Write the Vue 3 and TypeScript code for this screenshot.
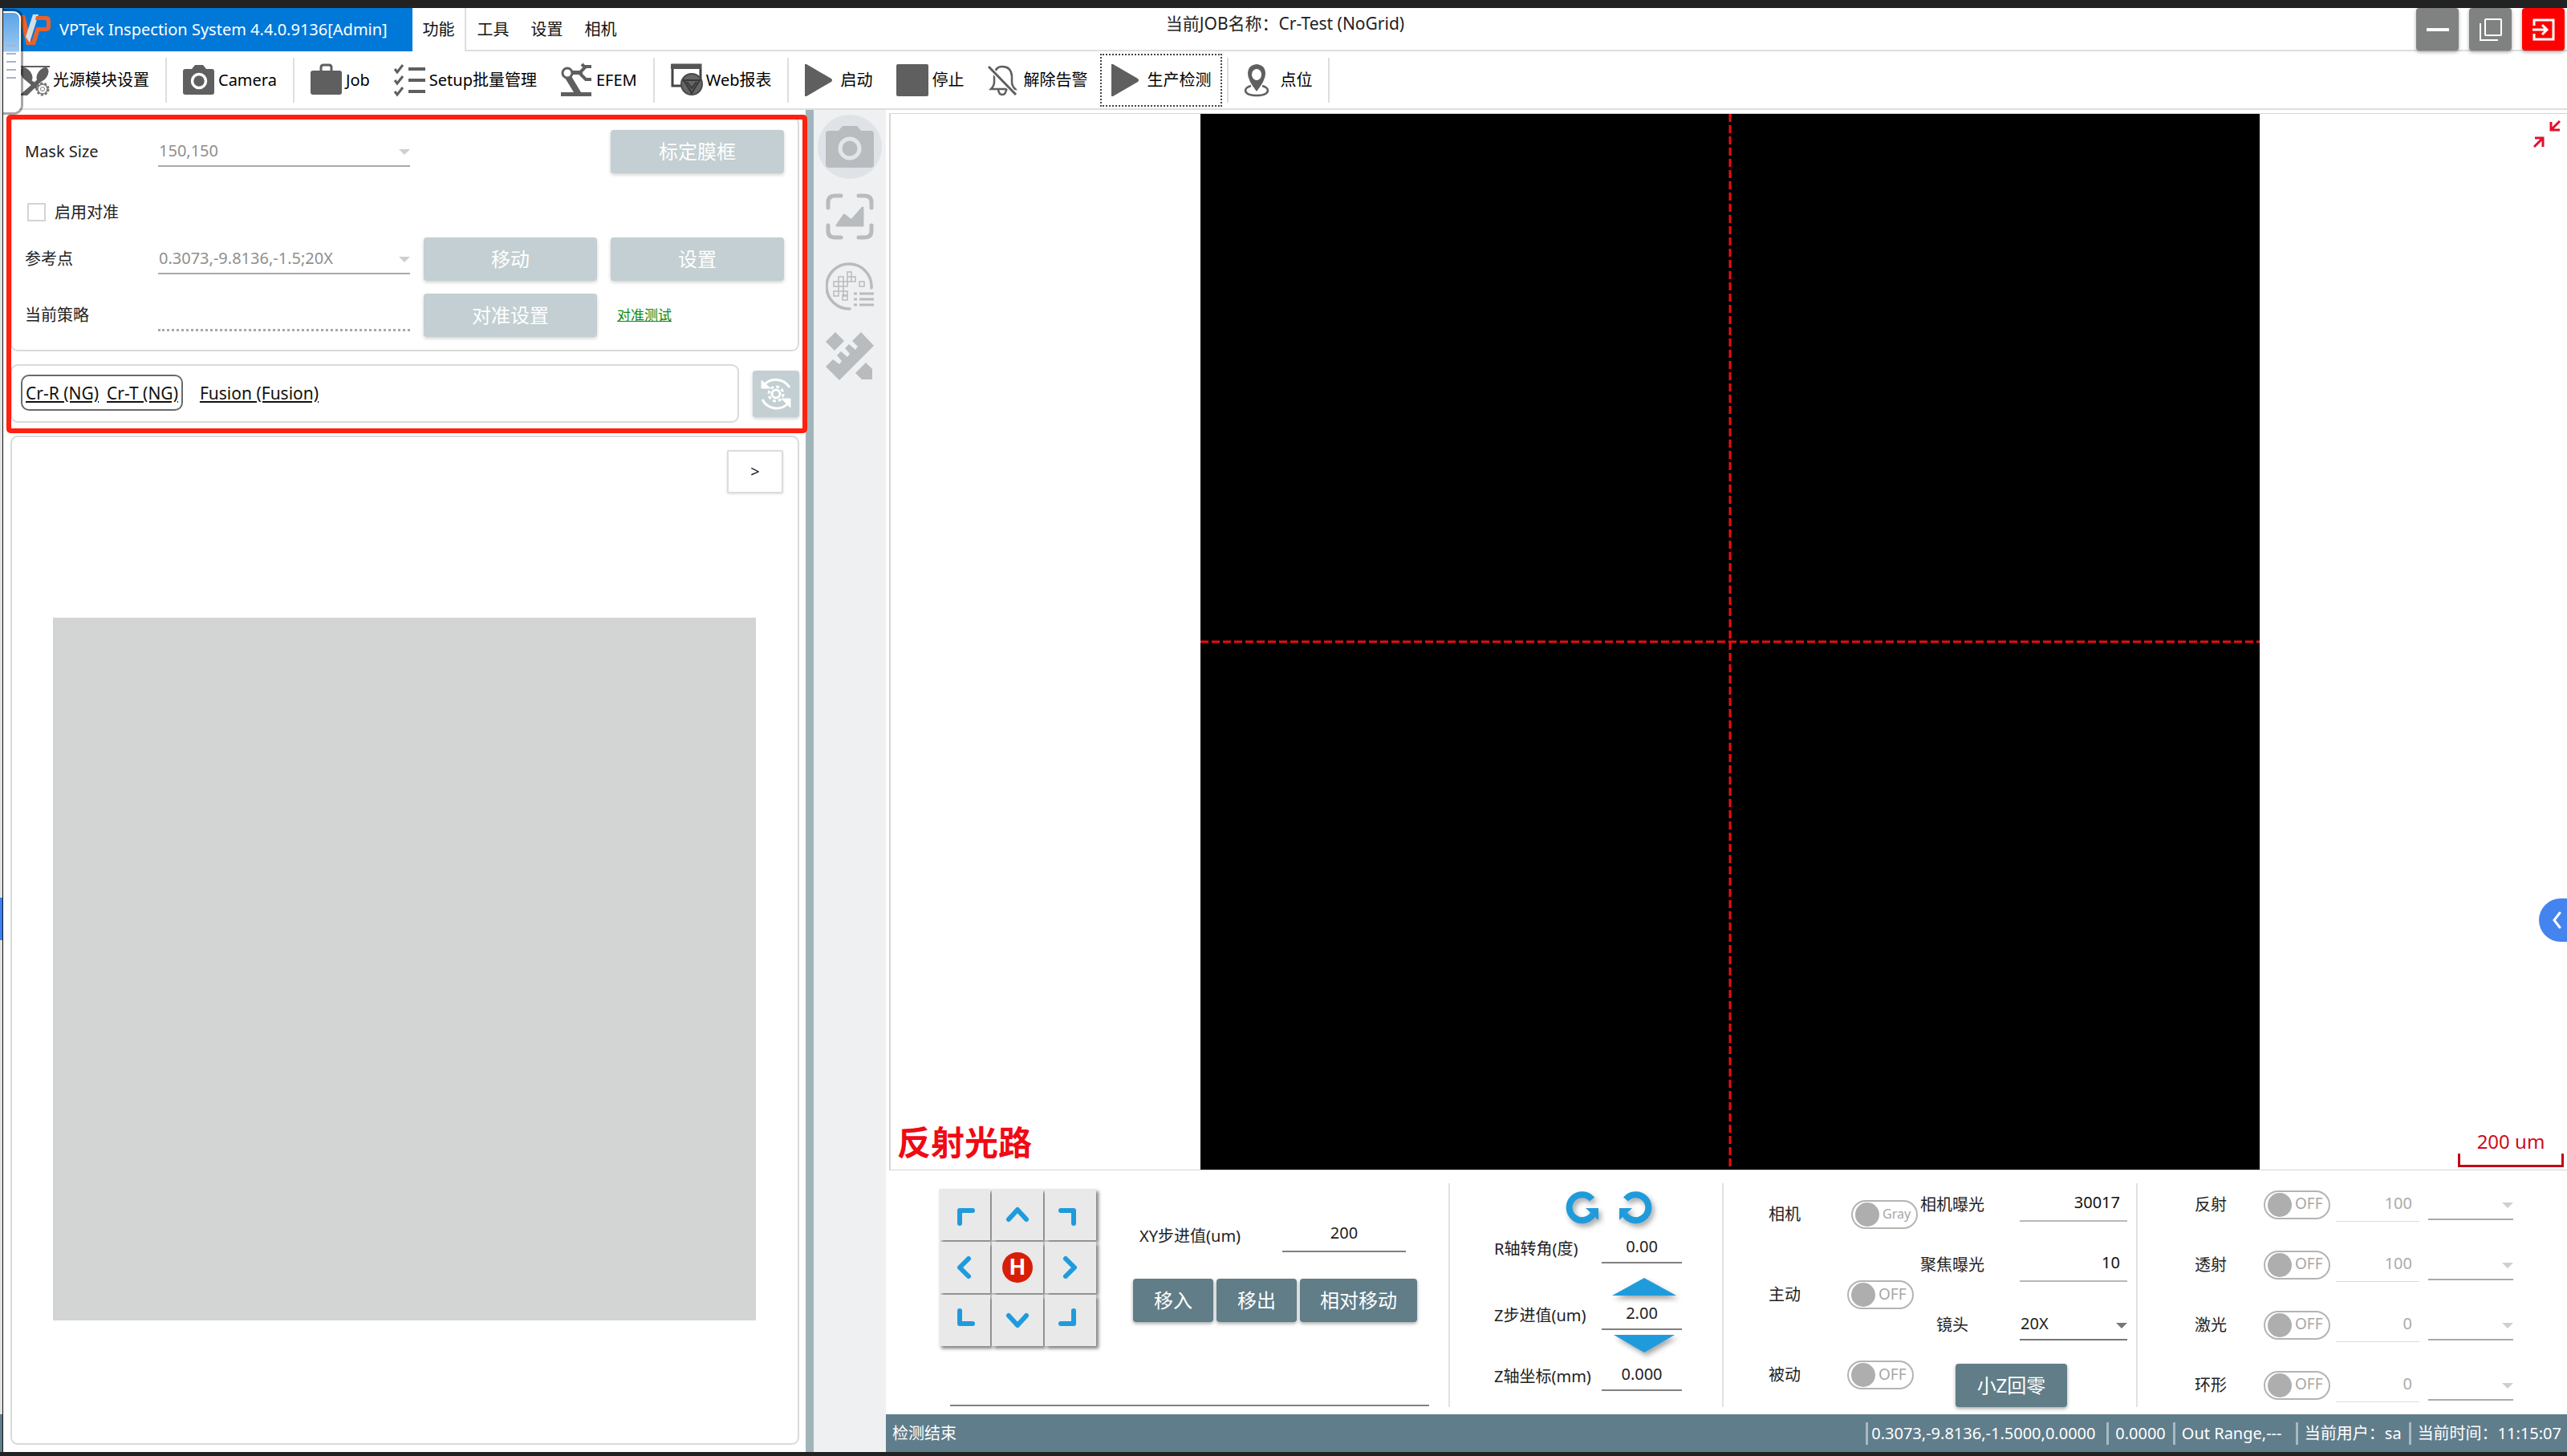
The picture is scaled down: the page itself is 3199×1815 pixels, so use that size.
<script setup lang="ts">
import { ref } from 'vue'

interface Tool {
  icon: string
  label: string
  active?: boolean
}

const menus = ['功能', '工具', '设置', '相机']

const toolGroups: Tool[][] = [
  [{ icon: 'lamp', label: '光源模块设置' }],
  [{ icon: 'camera', label: 'Camera' }],
  [
    { icon: 'case', label: 'Job' },
    { icon: 'list', label: 'Setup批量管理' },
    { icon: 'robot', label: 'EFEM' },
  ],
  [{ icon: 'web', label: 'Web报表' }],
  [
    { icon: 'play', label: '启动' },
    { icon: 'stop', label: '停止' },
    { icon: 'bell', label: '解除告警' },
    { icon: 'play', label: '生产检测', active: true },
  ],
  [{ icon: 'pin', label: '点位' }],
]

const icons: Record<string, string> = {
  lamp: '<path d="M0 3h40" stroke="#5f5f5f" stroke-width="2"/><path d="M5 4l6 6M36 4l-6 6" stroke="#5f5f5f" stroke-width="2"/><ellipse cx="11" cy="13" rx="6" ry="10" transform="rotate(-35 11 13)"/><ellipse cx="31" cy="13" rx="6" ry="10" transform="rotate(35 31 13)"/><path d="M27 17l3 4-18 18H2z"/><path d="M13 17l-2 4 16 14 3-6z"/><circle cx="31" cy="31" r="7" fill="#fff" stroke="#777" stroke-width="3" stroke-dasharray="3 2"/><circle cx="31" cy="31" r="6" fill="#fff" stroke="#777" stroke-width="1.500"/><circle cx="31" cy="31" r="2.500" fill="none" stroke="#777"/>',
  camera: '<path d="M3 6h8l4-5h10l4 5h7q3 0 3 3v26q0 3-3 3H3q-3 0-3-3V9q0-3 3-3z"/><circle cx="20" cy="21" r="8.500" fill="none" stroke="#fff" stroke-width="3.500"/>',
  case: '<rect x="0" y="8" width="39" height="30" rx="3"/><path d="M13 9V4q0-3 3-3h7q3 0 3 3v5" fill="none" stroke="#5f5f5f" stroke-width="3"/>',
  list: '<path d="M1 6l3 4 7-9M1 20l3 4 7-9M1 34l3 4 7-9" fill="none" stroke="#5f5f5f" stroke-width="3"/><path d="M18 6h21M18 20h21M18 34h21" stroke="#5f5f5f" stroke-width="4"/>',
  robot: '<path d="M0 35h38v5H0z"/><circle cx="8" cy="11" r="6" fill="none" stroke="#5f5f5f" stroke-width="3"/><path d="M5 17l11 18h9L13 15z"/><path d="M13 8h10v5H13z"/><path d="M38 3h-7l-6 6v4l6 6h7M29 3l-3-3" fill="none" stroke="#5f5f5f" stroke-width="4"/>',
  web: '<path d="M2 1h35v26H2z" fill="#fff" stroke="#444" stroke-width="3"/><path d="M0 0h38v6H0z" fill="#555"/><circle cx="26" cy="25" r="13" fill="#666" stroke="#4a4a4a" stroke-width="2"/><path d="M16 20h20L26 36zM20 22l6 8 6-8" fill="none" stroke="#383838" stroke-width="2"/>',
  play: '<path d="M0 0h2l31 18q2 2 0 4L2 40H0z"/>',
  stop: '<rect width="40" height="40" rx="2"/>',
  bell: '<path d="M4 31h30q-4-4-4-9v-7Q29 3 18 3 9 3 8 14v8q0 5-4 9zM13 32q1 6 5 6t5-6" fill="none" stroke="#5f5f5f" stroke-width="2.500"/><path d="M1 3l34 35" stroke="#fff" stroke-width="6"/><path d="M1 3l34 35" stroke="#5f5f5f" stroke-width="3"/>',
  pin: '<path d="M8 27q-7 2-7 6 1 6 14 6t14-6q0-4-7-6" fill="none" stroke="#5f5f5f" stroke-width="2.500"/><path fill-rule="evenodd" d="M15 0q11 1 11 12 0 8-11 22Q4 20 4 12 4 1 15 0zm0 6a6 7 0 1 0 .1 0z"/>',
}

const pad: { name: string; d: string }[] = [
  { name: '左上', d: 'M26 43V27h16' },
  { name: '上', d: 'M21 38l11-12 11 12' },
  { name: '右上', d: 'M20 27h16v16' },
  { name: '左', d: 'M37 21L26 32l11 11' },
  { name: '原点', d: '' },
  { name: '右', d: 'M26 21l11 11-11 11' },
  { name: '左下', d: 'M26 20v16h16' },
  { name: '下', d: 'M21 26l11 12 11-12' },
  { name: '右下', d: 'M20 36h16V20' },
]

const lights = [
  { name: '反射', value: '100' },
  { name: '透射', value: '100' },
  { name: '激光', value: '0' },
  { name: '环形', value: '0' },
]

const triggers = [
  { name: '相机', state: 'Gray' },
  { name: '主动', state: 'OFF' },
  { name: '被动', state: 'OFF' },
]

const status = ['0.3073,-9.8136,-1.5000,0.0000', '0.0000', 'Out Range,---', '当前用户：sa', '当前时间：11:15:07']

const xyStep = ref('200')
const rAngle = ref('0.00')
const zStep = ref('2.00')
const zPos = ref('0.000')
const cameraExposure = ref('30017')
const focusExposure = ref('10')
</script>

<template>
  <div class="screen">
    <div class="edge">
      <i class="edge-space-a"></i><i class="edge-tab"></i><i class="edge-space-b"></i><i class="edge-status"></i>
    </div>
    <div class="app">
      <header class="titlebar">
        <div class="brand">
          <svg class="logo" width="40" height="42" viewBox="0 0 40 42">
            <path d="M0 3h7l6 25 3 12h-7z" fill="#e8622a" />
            <path d="M17 2h7L13 37l-5-7z" fill="#d5dde6" />
            <path d="M21 4h13q5 0 5 6v7q0 6-6 6h-8l-5 17h-6l7-22h11q2 0 2-3v-3q0-3-2-3H20z" fill="#e8622a" />
          </svg>
          <span>VPTek Inspection System 4.4.0.9136[Admin]</span>
        </div>
        <nav class="menus">
          <button v-for="(m, i) in menus" :key="m" class="menu" :class="{ current: i === 0 }">{{ m }}</button>
        </nav>
        <div class="job">当前JOB名称：Cr-Test (NoGrid)</div>
        <div class="window-buttons">
          <button class="win" aria-label="最小化">
            <svg width="28" height="28" viewBox="0 0 28 28"><path d="M0 14h28" stroke="#fff" stroke-width="4" /></svg>
          </button>
          <button class="win" aria-label="还原">
            <svg width="28" height="28" viewBox="0 0 28 28" fill="none" stroke="#fff" stroke-width="2">
              <rect x="7" y="1" width="20" height="20" rx="1" /><path d="M1 6v21h22" />
            </svg>
          </button>
          <button class="win exit" aria-label="退出">
            <svg width="28" height="28" viewBox="0 0 28 28" fill="none" stroke="#fff" stroke-width="3">
              <path d="M2 9V2h24v24H2v-7M0 14h18M12 8l6 6-6 6" />
            </svg>
          </button>
        </div>
      </header>

      <div class="toolbar">
        <div v-for="(group, g) in toolGroups" :key="g" class="tool-group">
          <button v-for="t in group" :key="t.label" class="tool" :class="{ active: t.active }">
            <svg width="40" height="40" viewBox="0 0 40 40" fill="#5f5f5f" v-html="icons[t.icon]"></svg>
            <span>{{ t.label }}</span>
          </button>
        </div>
      </div>

      <div class="body">
        <aside class="sidebar">
          <div class="setup">
            <div class="highlight"></div>
            <section class="card form">
              <label for="mask">Mask Size</label>
              <span class="select dim"><select id="mask" disabled><option>150,150</option></select></span>
              <button class="btn pale last" disabled>标定膜框</button>

              <label class="check"><input type="checkbox" disabled /><span>启用对准</span></label>

              <label for="refpoint">参考点</label>
              <span class="select dim"><select id="refpoint" disabled><option>0.3073,-9.8136,-1.5;20X</option></select></span>
              <button class="btn pale" disabled>移动</button>
              <button class="btn pale" disabled>设置</button>

              <label for="strategy" class="spaced">当前策略</label>
              <input id="strategy" class="dotted spaced" disabled />
              <button class="btn pale spaced" disabled>对准设置</button>
              <a class="test spaced" href="#">对准测试</a>
            </section>

            <div class="recipes">
              <section class="card recipe-list">
                <div class="pair"><a href="#">Cr-R (NG)</a><a href="#">Cr-T (NG)</a></div>
                <a href="#">Fusion (Fusion)</a>
              </section>
              <button class="refresh" aria-label="刷新">
                <svg width="44" height="44" viewBox="0 0 44 44" fill="none" stroke="#fff" stroke-width="3">
                  <path d="M39 14A20 20 0 0 0 7 11M5 29a20 20 0 0 0 32 5" />
                  <path d="M4 5v10h11zM40 39V28H29z" fill="#fff" stroke-width="1" />
                  <circle cx="22" cy="22" r="5" />
                  <circle cx="22" cy="22" r="9" stroke-dasharray="4 3.070" />
                </svg>
              </button>
            </div>
          </div>

          <section class="card map">
            <button class="expand">&gt;</button>
            <div class="plate"></div>
          </section>
        </aside>

        <div class="splitter"></div>

        <nav class="rail">
          <button class="rail-button on" aria-label="拍照">
            <svg width="60" height="60" viewBox="0 0 60 60" fill="#b9bcbe">
              <path d="M4 10h12l5-6h18l5 6h12q4 0 4 4v38q0 4-4 4H4q-4 0-4-4V14q0-4 4-4z" />
              <circle cx="30" cy="32" r="12" fill="none" stroke="#e2e5e9" stroke-width="5" />
            </svg>
          </button>
          <button class="rail-button" aria-label="图像">
            <svg width="60" height="60" viewBox="0 0 60 60" fill="none" stroke="#b9bcbe" stroke-width="5" stroke-linecap="round">
              <path d="M19 4H12Q3 4 3 12v7M41 4h7q9 0 9 8v7M19 56H12q-9 0-9-8v-7M41 56h7q9 0 9-8v-7" />
              <path d="M14 41l9-13 9 7 14-16v22z" fill="#b9bcbe" stroke-width="3" stroke-linejoin="round" />
            </svg>
          </button>
          <button class="rail-button" aria-label="缺陷图">
            <svg width="60" height="60" viewBox="0 0 60 60" fill="none" stroke="#b9bcbe">
              <path d="M57 32A28 28 0 1 0 30 58" stroke-width="3.500" stroke-linecap="round" />
              <path d="M42 39h18M42 46h18M42 53h18M35 39h4M35 46h4M35 53h4" stroke-width="3" />
              <path d="M27 12h5v6h-5zM32 18h5v6h-5zM16 18h6v6h-6zM10 24h6v6h-6zM16 24h6v6h-6zM22 24h5v6h-5zM27 18h5v6h-5zM16 30h6v6h-6zM10 36h6v6h-6zM22 36h5v6h-5zM21 41h6v6h-6zM42 24h6v6h-6z" stroke-width="1.500" />
            </svg>
          </button>
          <button class="rail-button" aria-label="测量">
            <svg width="60" height="60" viewBox="0 0 60 60" fill="#b9bcbe">
              <path d="M12 0l11 11-12 12L0 12zM44 0l16 17-43 43L0 43l9-9 8 6 3-4-6-7 5-5 8 7 3-4-6-7 5-5 8 7 3-4-7-7zM50 38l8 8v13H45l-8-8z" />
            </svg>
          </button>
        </nav>

        <main class="main">
          <section class="viewer">
            <div class="frame">
              <svg class="cross" width="100%" height="100%" stroke="#f00a14" stroke-width="3" stroke-dasharray="10 4">
                <line x1="50%" y1="0" x2="50%" y2="100%" /><line x1="0" y1="50%" x2="100%" y2="50%" />
              </svg>
            </div>
            <svg class="collapse" width="34" height="34" viewBox="0 0 34 34" fill="none" stroke="#e0102c" stroke-width="3">
              <path d="M33 1L23 11M22 2v10h11M1 33l10-10M2 22h10v11" />
            </svg>
            <strong class="light-path">反射光路</strong>
            <div class="scale"><span>200 um</span><i></i></div>
          </section>

          <section class="controls">
            <div class="group motion">
              <div class="motion-top">
                <div class="pad">
                  <button v-for="p in pad" :key="p.name" :aria-label="p.name">
                    <svg v-if="p.d" width="64" height="64" viewBox="0 0 64 64" fill="none" stroke="#1f9bdc" stroke-width="6" stroke-linecap="round" stroke-linejoin="round"><path :d="p.d" /></svg>
                    <b v-else>H</b>
                  </button>
                </div>
                <div class="xy">
                  <div class="xy-row">
                    <label for="xy">XY步进值(um)</label><input id="xy" v-model="xyStep" class="field" />
                  </div>
                  <div class="xy-buttons">
                    <button class="btn short">移入</button><button class="btn short">移出</button><button class="btn wide">相对移动</button>
                  </div>
                </div>
              </div>
              <input class="field message" aria-label="消息" />
            </div>

            <div class="group axes">
              <div class="rotate">
                <button aria-label="逆时针">
                  <svg width="42" height="42" viewBox="0 0 42 42"><path d="M33 11A16 16 0 1 0 34 30" fill="none" stroke="#1f9bdc" stroke-width="8" /><path d="M25 22h16v15z" fill="#1f9bdc" /></svg>
                </button>
                <button aria-label="顺时针">
                  <svg width="42" height="42" viewBox="0 0 42 42"><path d="M9 11A16 16 0 1 1 8 30" fill="none" stroke="#1f9bdc" stroke-width="8" /><path d="M17 22H1v15z" fill="#1f9bdc" /></svg>
                </button>
              </div>
              <div class="axis"><label for="r">R轴转角(度)</label><input id="r" v-model="rAngle" class="field" /></div>
              <button class="arrow up" aria-label="上升">
                <svg width="80" height="22" viewBox="0 0 80 22"><path d="M40 0l40 22H0z" fill="#1f9bdc" /></svg>
              </button>
              <div class="axis"><label for="z">Z步进值(um)</label><input id="z" v-model="zStep" class="field" /></div>
              <button class="arrow down" aria-label="下降">
                <svg width="80" height="22" viewBox="0 0 80 22"><path d="M2 0h76L40 22z" fill="#1f9bdc" /></svg>
              </button>
              <div class="axis"><label for="zp">Z轴坐标(mm)</label><input id="zp" v-model="zPos" class="field" /></div>
            </div>

            <div class="group optics">
              <div class="triggers">
                <div v-for="t in triggers" :key="t.name" class="trigger">
                  <span class="name">{{ t.name }}</span>
                  <label class="toggle" :class="{ gray: t.state === 'Gray' }"><input type="checkbox" :aria-label="t.name" /><span>{{ t.state }}</span></label>
                </div>
              </div>
              <div class="exposure">
                <div class="line"><label for="ce">相机曝光</label><input id="ce" v-model="cameraExposure" class="number" /></div>
                <div class="line"><label for="fe">聚焦曝光</label><input id="fe" v-model="focusExposure" class="number" /></div>
                <div class="line"><label for="lens">镜头</label><span class="select lens"><select id="lens"><option>20X</option></select></span></div>
                <div class="line"><button class="btn home">小Z回零</button></div>
              </div>
            </div>

            <div class="group lights">
              <div v-for="l in lights" :key="l.name" class="line">
                <span class="name">{{ l.name }}</span>
                <label class="toggle"><input type="checkbox" :aria-label="l.name" /><span>OFF</span></label>
                <input class="number off" :value="l.value" :aria-label="l.name + '亮度'" disabled />
                <span class="select dim small"><select :aria-label="l.name + '通道'" disabled></select></span>
              </div>
            </div>
          </section>

          <footer class="status">
            <span class="message-text">检测结束</span>
            <span v-for="(s, i) in status" :key="i" class="cell">{{ s }}</span>
          </footer>
        </main>
      </div>
    </div>

    <button class="drawer" aria-label="展开">
      <svg width="12" height="22" viewBox="0 0 12 22" fill="none" stroke="#fff" stroke-width="3" stroke-linecap="round"><path d="M9 2L2 11l7 9" /></svg>
    </button>
    <div class="dock"><i></i><i></i><i></i><i></i><i></i></div>
  </div>
</template>

<style>
body {
  background: #222;
}
</style>

<style scoped>
* {
  box-sizing: border-box;
}

.screen {
  position: relative;
  display: flex;
  min-height: 100vh;
  border-top: 10px solid #222;
  border-bottom: 5px solid #222;
  background: #fff;
  color: #222;
  font: 20px/28px 'Noto Sans', 'Noto Sans CJK SC', sans-serif;
}

button,
input,
select {
  font: inherit;
  color: inherit;
  border: 0;
  border-radius: 0;
  background: none;
  padding: 0;
  margin: 0;
}

svg {
  display: block;
}

label,
span,
a {
  white-space: nowrap;
}

a {
  color: #111;
}

.edge {
  flex: none;
  display: flex;
  flex-direction: column;
  width: 4px;
  border-right: 1px solid #111;
  background: #e2e2e2;
}
.edge-space-a { flex: 1109; }
.edge-space-b { flex: 591; }
.edge-tab { height: 53px; background: #3a80f5; }
.edge-status { height: 47px; background: #607d8b; }

.app {
  flex: 1;
  min-width: 0;
  display: flex;
  flex-direction: column;
}

/* title bar */
.titlebar {
  position: relative;
  display: flex;
  height: 54px;
  border-bottom: 2px solid #dedede;
}
.brand {
  display: flex;
  align-items: center;
  gap: 10px;
  width: 510px;
  height: 54px;
  padding-left: 20px;
  background: #0078d7;
  color: #fff;
}
.menus {
  display: flex;
  height: 54px;
}
.menu {
  width: 67px;
  color: #111;
}
.menu.current {
  border-right: 2px solid #dedede;
  background: #fff;
}
.job {
  position: absolute;
  left: 0;
  right: 0;
  top: 5px;
  font-size: 21px;
  text-align: center;
  pointer-events: none;
}
.window-buttons {
  display: flex;
  gap: 13px;
  margin-left: auto;
  margin-right: 3px;
}
.win {
  display: grid;
  place-items: center;
  width: 53px;
  height: 53px;
  border-radius: 4px;
  background: #7f8280;
  box-shadow: 0 2px 4px rgba(0, 0, 0, 0.35);
}
.win.exit { background: #f00; }

/* toolbar */
.toolbar {
  display: flex;
  align-items: center;
  height: 73px;
  padding-left: 4px;
  border-bottom: 2px solid #dedede;
}
.tool-group {
  display: flex;
  align-items: center;
  gap: 2px;
  height: 56px;
  padding-right: 6px;
  margin-right: 6px;
  border-right: 2px solid #dedede;
}
.tool {
  display: flex;
  align-items: center;
  gap: 4px;
  height: 66px;
  padding: 0 14px;
  color: #000;
}
.tool.active {
  outline: 2px dotted #444;
  outline-offset: -2px;
}
.tool svg { overflow: visible; }

.body {
  flex: 1;
  display: flex;
}

/* left column */
.sidebar {
  flex: none;
  display: flex;
  flex-direction: column;
  width: 1000px;
  padding: 0 8px 9px 9px;
}
.setup {
  position: relative;
  padding: 8px 0 16px;
}
.highlight {
  position: absolute;
  z-index: 2;
  inset: 6px -10px 3px -5px;
  border: 6px solid #ff2010;
  border-radius: 5px;
  pointer-events: none;
}
.card {
  border: 2px solid #d9dada;
  border-radius: 9px;
  background: #fff;
}
.form {
  display: grid;
  grid-template-columns: 149px 314px 216px 216px;
  column-gap: 17px;
  align-items: center;
  padding: 15px 16px 16px;
}
.last { grid-column: 4; }
.check {
  grid-column: 1 / -1;
  display: flex;
  align-items: center;
  gap: 11px;
  height: 80px;
  padding: 17px 0 0 3px;
}
.check input {
  appearance: none;
  width: 23px;
  height: 23px;
  border: 2px solid #d4d4d4;
  background: #fff;
}
.spaced { margin-top: 16px; }
.dotted {
  width: 100%;
  height: 40px;
  border-bottom: 3px dotted #a8a8a8;
}
.test {
  margin-left: 8px;
  color: #0a8a0a;
  font-size: 17px;
}

.btn {
  height: 54px;
  border-radius: 4px;
  background: #607d88;
  color: #fff;
  font-size: 24px;
  box-shadow: 0 2px 4px rgba(0, 0, 0, 0.35);
}
.btn.pale {
  background: #c3cfd2;
  box-shadow: 0 2px 4px rgba(0, 0, 0, 0.18);
}

.select {
  position: relative;
  display: block;
}
.select::after {
  content: '';
  position: absolute;
  right: 0;
  top: 16px;
  border: solid transparent;
  border-width: 7px 7px 0;
  border-top-color: #777;
}
.select select {
  appearance: none;
  display: block;
  width: 100%;
  height: 38px;
  padding: 0 0 1px 1px;
  border-bottom: 2px solid #777;
  opacity: 1;
}
.select.dim::after { border-top-color: #cfcfcf; }
.select.dim select {
  color: #8f8f8f;
  border-bottom-color: #aaa;
}

.recipes {
  display: flex;
  align-items: center;
  gap: 17px;
  margin-top: 16px;
  font-size: 21px;
}
.recipe-list {
  flex: 1;
  display: flex;
  align-items: center;
  gap: 21px;
  height: 73px;
  padding: 0 0 2px 11px;
}
.pair {
  display: flex;
  align-items: center;
  gap: 10px;
  height: 45px;
  padding: 0 4px;
  border: 2px solid #6a6a6a;
  border-radius: 10px;
}
.refresh {
  display: grid;
  place-items: center;
  width: 58px;
  height: 58px;
  border-radius: 4px;
  background: #c3cfd2;
  box-shadow: 0 2px 4px rgba(0, 0, 0, 0.18);
}
.map {
  flex: 1;
  padding: 16px 18px 0 51px;
}
.expand {
  display: block;
  width: 70px;
  height: 54px;
  margin-left: auto;
  border: 2px solid #dcdcdc;
  border-radius: 2px;
  background: #fff;
  box-shadow: 0 1px 3px rgba(0, 0, 0, 0.12);
}
.plate {
  margin: 155px 34px 0 0;
  aspect-ratio: 1;
  background: #d3d4d4;
}

.splitter {
  flex: none;
  width: 10px;
  background: #a2b4ba;
}
.rail {
  flex: none;
  display: flex;
  flex-direction: column;
  align-items: center;
  gap: 7px;
  width: 90px;
  padding-top: 6px;
  background: #eef0f2;
}
.rail-button {
  display: grid;
  place-items: center;
  width: 80px;
  height: 80px;
  border-radius: 50%;
}
.rail-button.on { background: #dfe3e8; }

/* camera view */
.main {
  flex: 1;
  min-width: 0;
  display: flex;
  flex-direction: column;
}
.viewer {
  flex: 1;
  position: relative;
  display: flex;
  justify-content: center;
  margin: 4px 0 0 4px;
  padding-left: 2px;
  border: solid #d6d6d6;
  border-width: 1px 0 1px 2px;
}
.frame {
  width: 1320px;
  background: #000;
}
.cross { display: block; }
.collapse {
  position: absolute;
  right: 8px;
  top: 8px;
}
.light-path {
  position: absolute;
  left: 8px;
  bottom: 6px;
  color: #f00a14;
  font-size: 42px;
  line-height: 56px;
}
.scale {
  position: absolute;
  right: 4px;
  bottom: 3px;
  width: 132px;
  color: #d00a20;
  font-size: 24px;
  line-height: 30px;
  text-align: center;
}
.scale i {
  display: block;
  height: 17px;
  border: 3px solid #c00418;
  border-top: 0;
}

/* motion, axis and light controls */
.controls {
  display: grid;
  grid-template-columns: 701fr 341fr 516fr 537fr;
  height: 304px;
}
.group { position: relative; }
.group + .group::before {
  content: '';
  position: absolute;
  left: 0;
  top: 16px;
  bottom: 10px;
  border-left: 2px solid #e2e2e2;
}
.motion { padding: 23px 0 0 66px; }
.motion-top {
  display: flex;
  gap: 46px;
}
.pad {
  display: grid;
  grid-template-columns: repeat(3, 64px);
  gap: 2px;
}
.pad button {
  display: grid;
  place-items: center;
  height: 64px;
  background: #e9e9e9;
  box-shadow: 3px 3px 4px rgba(0, 0, 0, 0.5);
}
.pad b {
  width: 38px;
  height: 38px;
  border-radius: 50%;
  background: #d81e06;
  color: #fff;
  font: bold 28px/38px Roboto, sans-serif;
  text-align: center;
}
.xy { padding-top: 38px; }
.xy-row {
  display: flex;
  align-items: center;
  justify-content: space-between;
  padding: 0 14px 0 8px;
}
.field {
  width: 100px;
  height: 37px;
  padding-bottom: 4px;
  border-bottom: 2px solid #808080;
  text-align: center;
}
.xy-row .field {
  width: 154px;
  height: 41px;
  padding-bottom: 6px;
}
.xy-buttons {
  display: flex;
  gap: 4px;
  margin-top: 33px;
}
.short { width: 100px; }
.wide { width: 146px; }
.field.message {
  display: block;
  width: 597px;
  height: 40px;
  margin: 35px 0 0 14px;
  text-align: left;
}

.axes { padding: 25px 0 0 57px; }
.rotate {
  display: flex;
  gap: 24px;
  padding-left: 89px;
  filter: drop-shadow(3px 4px 3px rgba(0, 0, 0, 0.35));
}
.axis {
  display: flex;
  align-items: center;
}
.axis label {
  flex: none;
  width: 134px;
}
.rotate + .axis { margin-top: 12px; }
.arrow {
  display: block;
  margin-left: 147px;
  filter: drop-shadow(3px 4px 3px rgba(0, 0, 0, 0.35));
}
.arrow.up { margin-top: 18px; margin-bottom: 6px; }
.arrow.down { margin-top: 6px; margin-bottom: 11px; }

.optics {
  display: flex;
  padding: 5px 0 0 58px;
}
.triggers { width: 189px; }
.trigger {
  display: flex;
  align-items: center;
  height: 100px;
}
.trigger .name { width: 98px; }
.toggle {
  flex: none;
  display: flex;
  align-items: center;
  width: 83px;
  height: 36px;
  padding-left: 3px;
  border: 2px solid #b4b4b4;
  border-radius: 18px;
  color: #a6a6a6;
  font-size: 19px;
}
.toggle input {
  appearance: none;
  flex: none;
  width: 30px;
  height: 30px;
  margin-right: 4px;
  border-radius: 50%;
  background: #aeaeae;
}
.toggle span { padding-bottom: 3px; }
.toggle.gray {
  margin-left: 5px;
  font-size: 16px;
}
.line {
  display: flex;
  align-items: center;
  height: 75px;
}
.exposure label {
  width: 80px;
  margin-right: 44px;
  text-align: center;
}
.number {
  width: 134px;
  height: 42px;
  padding: 0 9px 4px 0;
  border-bottom: 2px solid #b8b8b8;
  color: #111;
  text-align: right;
}
.lens { width: 134px; }
.home {
  width: 139px;
  margin-left: 44px;
}

.lights { padding: 5px 0 0 73px; }
.lights .name { width: 86px; }
.number.off {
  width: 104px;
  margin: 0 11px 0 7px;
  border-bottom: 1px solid #dcdcdc;
  color: #ababab;
}
.small { width: 106px; }

.status {
  display: flex;
  align-items: center;
  height: 47px;
  padding: 0 7px 0 8px;
  background: #607d8b;
  color: #fff;
}
.message-text { margin-right: auto; }
.cell {
  padding: 0 9px 0 8px;
  border-left: 3px solid #a9b9c1;
}
.cell:nth-child(2) {
  min-width: 300px;
  padding-left: 4px;
}
.cell:nth-child(4) { min-width: 153px; }
.cell:last-child { padding-right: 0; }

/* overlays at the window edges */
.drawer {
  position: absolute;
  right: 0;
  top: 1110px;
  display: flex;
  align-items: center;
  width: 35px;
  height: 54px;
  padding-left: 17px;
  border-radius: 27px 0 0 27px;
  background: #4384ee;
}
.dock {
  position: absolute;
  left: 4px;
  top: 4px;
  display: flex;
  flex-direction: column;
  gap: 8px;
  width: 22px;
  height: 126px;
  padding: 40px 0 0 4px;
  border: 2px solid #fff;
  border-left: 0;
  border-radius: 0 9px 9px 0;
  background: linear-gradient(#5ba3e6, #9cc8f2 48px, #fff 49px);
  box-shadow: 0 0 0 3px rgba(0, 0, 0, 0.35);
  clip-path: inset(-4px -4px -4px 0);
}
.dock i {
  flex: none;
  width: 12px;
  height: 2px;
  background: #a9b4c8;
}
</style>
